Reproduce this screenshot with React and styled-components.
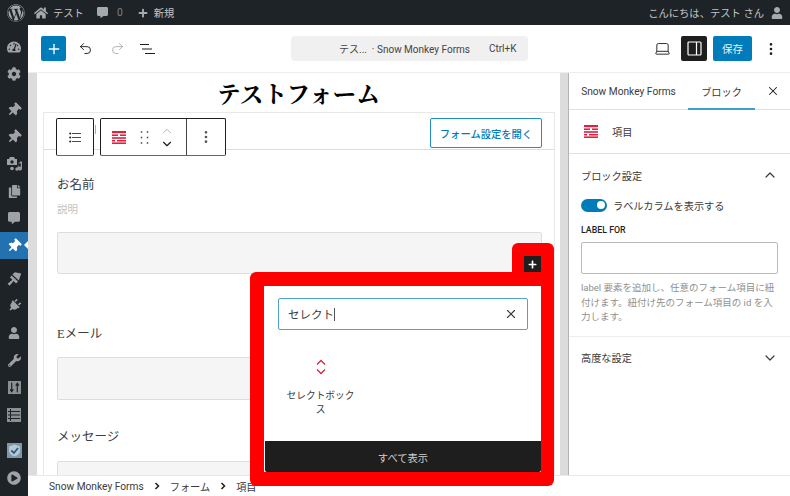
import React from "react";
import styled, { createGlobalStyle } from "styled-components";
import { Plus, Undo2, Redo2, X, ChevronUp, ChevronDown, EllipsisVertical, Laptop } from "lucide-react";
import {
  FaWordpress, FaHome, FaCommentAlt, FaTachometerAlt, FaCog, FaThumbtack, FaCopy,
  FaPlug, FaUser, FaWrench, FaPlayCircle, FaPlus,
} from "react-icons/fa";

const SANS = `Roboto, "Noto Sans CJK JP", sans-serif`;

const Global = createGlobalStyle`
  html, body { margin: 0; padding: 0; height: 100%; overflow: hidden; background: #fff; }
  #root { height: 100%; }
  * { box-sizing: border-box; }
  body { font-family: ${SANS}; color: #1e1e1e; }
`;

const Page = styled.div`
  position: relative;
  width: 790px;
  height: 496px;
  overflow: hidden;
  display: flex;
  flex-direction: column;
`;

/* Admin bar */
const AdminBar = styled.header`
  height: 25px;
  flex: none;
  background: #1d2327;
  color: #c3c4c7;
  display: flex;
  align-items: center;
  font-size: 10.3px;
  padding: 0 7px 0 7px;
`;
const BarItem = styled.div`
  display: flex;
  align-items: center;
  gap: ${p => p.$gap ?? 5}px;
  margin-left: ${p => p.$ml ?? 0}px;
  color: ${p => p.$dim ? "#7d8185" : "#c3c4c7"};
  svg { color: #a7aaad; flex: none; }
`;
const BarSpacer = styled.div`flex: 1;`;

/* Layout */
const Body = styled.div`
  flex: 1;
  display: flex;
  min-height: 0;
`;
const AdminMenu = styled.nav`
  width: 28px;
  flex: none;
  background: #1d2327;
  padding-top: 8px;
  display: flex;
  flex-direction: column;
`;
const MenuItem = styled.div`
  position: relative;
  height: 27.2px;
  flex: none;
  margin-top: ${p => p.$gap ?? 0}px;
  display: flex;
  align-items: center;
  justify-content: center;
  color: ${p => p.$active ? "#fff" : "#9ea2a6"};
  background: ${p => p.$active ? "#2271b1" : "transparent"};
  &::after {
    content: "";
    display: ${p => p.$active ? "block" : "none"};
    position: absolute;
    right: 0;
    top: 9px;
    border: 4.5px solid transparent;
    border-right-color: #fff;
    border-left-width: 0;
  }
`;
const Pin = styled(FaThumbtack)`
  transform: rotate(45deg);
`;
const Plug = styled(FaPlug)`
  transform: rotate(45deg);
`;
const Workspace = styled.main`
  flex: 1;
  min-width: 0;
  display: flex;
  flex-direction: column;
`;

/* Top toolbar */
const TopBar = styled.div`
  height: 48px;
  flex: none;
  display: flex;
  align-items: center;
  padding: 0 0 0 13px;
  border-bottom: 1px solid #eee;
  background: #fff;
`;
const InserterToggle = styled.div`
  width: 25px;
  height: 25px;
  background: #007cba;
  border-radius: 2px;
  color: #fff;
  display: flex;
  align-items: center;
  justify-content: center;
`;
const ToolIcon = styled.div`
  width: ${p => p.$w ?? 32}px;
  flex: none;
  display: flex;
  align-items: center;
  justify-content: center;
  color: ${p => p.$muted ? "#b0b0b0" : "#1e1e1e"};
`;
const ToolLeft = styled.div`
  display: flex;
  align-items: center;
  width: 250px;
  flex: none;
`;
const CommandCenter = styled.div`
  width: 237px;
  height: 25px;
  flex: none;
  background: #f0f0f0;
  border-radius: 4px;
  display: flex;
  align-items: center;
  font-size: 10px;
  color: #444;
  padding: 0 0 0 48px;
`;
const CommandShortcut = styled.span`
  margin-left: 19px;
  color: #444;
`;
const ToolRight = styled.div`
  flex: 1;
  display: flex;
  align-items: center;
  justify-content: flex-end;
`;
const SidebarToggle = styled.div`
  width: 26px;
  height: 25px;
  background: #1e1e1e;
  border-radius: 2px;
  margin: 0 6px;
  display: flex;
  align-items: center;
  justify-content: center;
  color: #fff;
`;
const SaveButton = styled.div`
  width: 39px;
  height: 25px;
  background: #007cba;
  color: #e8f2f8;
  border-radius: 2px;
  font-size: 10.5px;
  display: flex;
  align-items: center;
  justify-content: center;
`;

/* Editor */
const EditorRow = styled.div`
  flex: 1;
  min-height: 0;
  display: flex;
  border-bottom: 1px solid #e8e8e8;
`;
const EditorScroll = styled.div`
  width: 541px;
  flex: none;
  background: #dcdcdc;
  padding: 0 8px 0 9px;
  border-right: 1px solid #b4b4b4;
  overflow: hidden;
`;
const Canvas = styled.div`
  height: 100%;
  background: #fff;
  padding: 0 5px 0 6px;
  overflow: hidden;
`;
const Title = styled.h1`
  margin: 0;
  height: 39px;
  font: 700 23.7px/40px "Noto Serif CJK JP", "Liberation Serif", serif;
  color: #000;
  text-align: center;
  padding-right: 1px;
`;
const FormBox = styled.section`
  border: 1px solid #e8e8e8;
  border-bottom: 0;
  height: 400px;
`;
const FormHeader = styled.div`
  height: 37px;
  border-bottom: 1px solid #ddd;
  display: flex;
  align-items: center;
  justify-content: flex-end;
  padding: 4px 12px 0 0;
`;
const OutlineButton = styled.div`
  width: 112px;
  height: 30px;
  border: 1px solid #1f8fc6;
  border-radius: 2px;
  color: #007cba;
  font-size: 10.3px;
  font-weight: 500;
  display: flex;
  align-items: center;
  justify-content: center;
`;
const FormBody = styled.div`
  padding: 26px 12px 0 13px;
  display: flex;
  flex-direction: column;
`;
const FieldLabel = styled.div`
  font: 400 12.5px/18px "Liberation Serif", "Noto Sans CJK JP", serif;
  color: #3c3c3c;
  margin-top: ${p => p.$mt ?? 0}px;
`;
const FieldHint = styled.div`
  font-size: 10.5px;
  line-height: 16px;
  color: #c2c2c2;
  margin-top: 8px;
`;
const FieldInput = styled.div`
  height: ${p => p.$h ?? 42}px;
  background: #f5f5f5;
  border: 1px solid #ddd;
  border-radius: 2px;
  margin-top: ${p => p.$mt ?? 0}px;
`;

/* Inspector */
const Inspector = styled.aside`
  flex: 1;
  background: #fff;
  display: flex;
  flex-direction: column;
`;
const Tabs = styled.div`
  height: 37px;
  flex: none;
  border-bottom: 1px solid #e0e0e0;
  display: flex;
  align-items: stretch;
  font-size: 10.2px;
  color: #3a3a3a;
  padding-left: 12px;
`;
const Tab = styled.div`
  display: flex;
  align-items: center;
  justify-content: center;
  white-space: nowrap;
  width: ${p => p.$w}px;
  margin-left: ${p => p.$ml ?? 0}px;
  margin-bottom: -1px;
  border-bottom: ${p => p.$active ? "2px solid #3f9fd0" : "0"};
  padding-top: ${p => p.$active ? "2px" : "0"};
`;
const TabClose = styled.div`
  flex: 1;
  display: flex;
  align-items: center;
  justify-content: center;
  color: #1e1e1e;
`;
const BlockCard = styled.div`
  height: 44px;
  flex: none;
  border-bottom: 1px solid #e0e0e0;
  display: flex;
  align-items: center;
  padding-left: 15px;
  gap: 13px;
  font-size: 10.2px;
  color: #3a3a3a;
`;
const Panel = styled.section`
  padding: 0 12px;
  border-bottom: ${p => p.$flat ? "0" : "1px solid #eee"};
  display: flex;
  flex-direction: column;
`;
const PanelHead = styled.div`
  height: 42px;
  flex: none;
  display: flex;
  align-items: center;
  justify-content: space-between;
  font-size: 10.2px;
  color: #3a3a3a;
`;
const ToggleRow = styled.div`
  display: flex;
  align-items: center;
  gap: 6px;
  height: 16px;
  margin-top: 1px;
  font-size: 10.2px;
  color: #3a3a3a;
`;
const Switch = styled.div`
  position: relative;
  width: 26px;
  height: 13px;
  border-radius: 7px;
  background: #007cba;
  &::after {
    content: "";
    position: absolute;
    top: 2.5px;
    right: 2.5px;
    width: 8px;
    height: 8px;
    border-radius: 50%;
    background: #fff;
  }
`;
const FieldCaps = styled.div`
  font-size: 8.8px;
  font-weight: 500;
  line-height: 12px;
  color: #1e1e1e;
  margin-top: 11px;
`;
const SideInput = styled.div`
  height: 32px;
  border: 1px solid #bbb;
  border-radius: 2px;
  margin-top: 6px;
`;
const HelpText = styled.p`
  margin: 7px 0 11px;
  font-size: 9.5px;
  line-height: 14.5px;
  color: #8f8f8f;
`;

/* Breadcrumb */
const Breadcrumb = styled.footer`
  height: 20px;
  flex: none;
  display: flex;
  align-items: center;
  padding: 0 0 0 21px;
  font-size: 10.2px;
  color: #3a3a3a;
  gap: 10px;
  svg { color: #1e1e1e; }
`;

/* Overlays */
const BlockToolbar = styled.div`
  position: absolute;
  left: 56px;
  top: 118px;
  display: flex;
  gap: 6px;
  color: #1e1e1e;
`;
const ToolbarGroup = styled.div`
  height: 38px;
  border: 1px solid #1e1e1e;
  border-bottom-color: #666;
  border-radius: 2px;
  background: #fff;
  display: flex;
  align-items: center;
`;
const ToolbarCell = styled.div`
  width: ${p => p.$w}px;
  height: 100%;
  flex: none;
  display: flex;
  align-items: center;
  justify-content: center;
  border-left: ${p => p.$divider ? "1px solid #444" : "0"};
  color: ${p => p.$divider ? "#555" : "inherit"};
`;
const MoverStack = styled.div`
  display: flex;
  flex-direction: column;
  align-items: center;
  margin-right: 3px;
  svg:first-child { color: #aaa; margin-bottom: -1px; }
`;
const PeekMark = styled.span`
  position: absolute;
  left: 95px;
  top: 125px;
  width: 1px;
  height: 9px;
  background: #aaa;
`;
const RedTab = styled.div`
  position: absolute;
  left: 512px;
  top: 243px;
  width: 42px;
  height: 45px;
  background: #f00;
  border-radius: 6px 6px 0 0;
  display: flex;
  justify-content: flex-end;
  padding: 13px 13px 0 0;
`;
const AppenderButton = styled.div`
  width: 17px;
  height: 17px;
  background: #1e1e1e;
  color: #fff;
  display: flex;
  align-items: center;
  justify-content: center;
`;
const RedFrame = styled.div`
  position: absolute;
  left: 250px;
  top: 272px;
  width: 304px;
  height: 214px;
  background: #f00;
  border-radius: 6px;
  padding: 14px 13px 14px 14px;
`;
const Inserter = styled.div`
  height: 100%;
  background: #fff;
  display: flex;
  flex-direction: column;
`;
const SearchBox = styled.div`
  flex: none;
  height: 32px;
  margin: 12px 13px 0 14px;
  border: 1px solid #4fa3d1;
  border-radius: 2px;
  display: flex;
  align-items: center;
  justify-content: space-between;
  padding: 0 9px;
  font-size: 11.5px;
  color: #3a3a3a;
`;
const Caret = styled.span`
  display: inline-block;
  width: 1px;
  height: 13px;
  background: #555;
  vertical-align: -2px;
`;
const Results = styled.div`
  flex: 1;
  padding: 29px 0 0 19px;
`;
const ResultItem = styled.div`
  width: 75px;
  display: flex;
  flex-direction: column;
  align-items: center;
  gap: 14px;
  text-align: center;
  font-size: 9.7px;
  line-height: 13.5px;
  color: #3a3a3a;
`;
const ShowAll = styled.div`
  height: 31px;
  flex: none;
  margin-left: 1px;
  background: #1e1e1e;
  color: #d0d0d0;
  border-radius: 0 0 2px 2px;
  font-size: 10.3px;
  display: flex;
  align-items: center;
  justify-content: center;
  padding-top: 2px;
`;

/* Drawings */
const ItemIcon = () => (
  <svg width="15" height="13" viewBox="0 0 15 13" fill="#e0203f">
    <rect x="0" y="0" width="14" height="2.2" />
    <rect x="0" y="3.4" width="6" height="1.6" />
    <rect x="8" y="3.4" width="6" height="1.6" />
    <rect x="0" y="6.2" width="14" height="1.6" />
    <rect x="0" y="9" width="3" height="1.5" />
    <rect x="5" y="9" width="9" height="1.5" />
    <rect x="0" y="11.4" width="14" height="1.6" />
  </svg>
);
const ListViewIcon = () => (
  <svg width="16" height="12" viewBox="0 0 16 12" fill="none" stroke="#1e1e1e" strokeWidth="1.2">
    <path d="M0 1.5h10M3 6h10M6 10.5h10" transform="translate(-1 0)" />
  </svg>
);
const OutlineIcon = () => (
  <svg width="12" height="11" viewBox="0 0 12 11" fill="#1e1e1e">
    <circle cx="1.2" cy="1.5" r="1" /><circle cx="1.2" cy="5.5" r="1" /><circle cx="1.2" cy="9.5" r="1" />
    <rect x="3" y="1.1" width="9" height=".8" /><rect x="3" y="5.1" width="9" height=".8" /><rect x="3" y="9.1" width="9" height=".8" />
  </svg>
);
const DragIcon = () => (
  <svg width="9" height="13" viewBox="0 0 9 13" fill="#444">
    {[1, 6.5, 12].flatMap(y => [1.5, 7.5].map(x => <rect key={`${x}-${y}`} x={x - .75} y={y - .75} width="1.5" height="1.5" />))}
  </svg>
);
const SidebarIcon = () => (
  <svg width="15" height="15" viewBox="0 0 15 15" fill="none" stroke="currentColor" strokeWidth="1.2">
    <rect x="1" y="1" width="13" height="13" rx="1" />
    <path d="M9.5 1v13" />
  </svg>
);
const MediaIcon = () => (
  <svg width="17" height="15" viewBox="0 0 17 15" fill="currentColor">
    <path d="M1 3h2l1-2h4l1 2h2v6H1z" />
    <circle cx="6" cy="6" r="1.7" fill="#1d2327" />
    <path d="M14 5.5h2v7a2 2 0 1 1-1.2-1.8V7.5h-2.3v5.6a1.6 1.6 0 1 1-1.2-1.5z" opacity=".95" />
    <circle cx="6" cy="12.5" r="1.8" />
  </svg>
);
const BrushIcon = () => (
  <svg width="16" height="16" viewBox="0 0 20 20" fill="currentColor">
    <path d="M8 4.500 11 1.500l8 1.500-3 9z" />
    <path d="M7 5.500 15 13l-2.500 2.500-3-3-5 6-2.500-2.500 6-5-3-3z" />
  </svg>
);
const SlidersIcon = () => (
  <svg width="13" height="13" viewBox="0 0 14 14">
    <rect width="14" height="14" fill="currentColor" opacity=".85" />
    <path d="M4 2v9M2.300 9 4 11.500 5.700 9M10 12V3M8.300 5 10 2.500 11.700 5" fill="none" stroke="#1d2327" strokeWidth="1.300" />
  </svg>
);
const ListIcon = () => (
  <svg width="14" height="14" viewBox="0 0 14 14">
    <rect width="14" height="14" fill="currentColor" opacity=".85" />
    <path d="M1 3.500h12M1 7h12M1 10.500h12M3.500 1v12" fill="none" stroke="#1d2327" strokeWidth="1" />
  </svg>
);
const ShieldIcon = () => (
  <svg width="15" height="15" viewBox="0 0 15 15">
    <rect width="15" height="15" fill="#7f98a8" />
    <path d="M7.500 1.500 13 3.500v4c0 3-2.500 5-5.500 6C4.500 12.500 2 10.500 2 7.500v-4z" fill="#b9c9d3" />
    <path d="M4.300 7.500 7 10l4-5" fill="none" stroke="#2a5a8f" strokeWidth="1.800" />
  </svg>
);
const SelectIcon = () => (
  <svg width="12" height="16" viewBox="0 0 12 16" fill="none" stroke="#d9243f" strokeWidth="1.300">
    <path d="M2 5.500 6 1.500l4 4M2 10.500l4 4 4-4" />
  </svg>
);
const CrumbChevron = () => (
  <svg width="6" height="8" viewBox="0 0 6 8" fill="none" stroke="currentColor" strokeWidth="1.500">
    <path d="M1.500 1 4.500 4l-3 3" />
  </svg>
);

export default function App() {
  return (
    <Page>
      <Global />
      <AdminBar>
        <BarItem><FaWordpress size={18} /></BarItem>
        <BarItem $ml={9}><FaHome size={14} /><span>テスト</span></BarItem>
        <BarItem $ml={13} $dim $gap={9}><FaCommentAlt size={11} /><span>0</span></BarItem>
        <BarItem $ml={15} $gap={6}><FaPlus size={10} /><span>新規</span></BarItem>
        <BarSpacer />
        <BarItem $gap={7}><span>こんにちは、テスト さん</span><FaUser size={12} /></BarItem>
      </AdminBar>
      <Body>
        <AdminMenu>
          <MenuItem><FaTachometerAlt size={14} /></MenuItem>
          <MenuItem><FaCog size={14} /></MenuItem>
          <MenuItem $gap={8.6}><Pin size={14} /></MenuItem>
          <MenuItem><Pin size={14} /></MenuItem>
          <MenuItem><MediaIcon /></MenuItem>
          <MenuItem><FaCopy size={13} /></MenuItem>
          <MenuItem><FaCommentAlt size={12} /></MenuItem>
          <MenuItem $active><Pin size={14} /></MenuItem>
          <MenuItem $gap={6}><BrushIcon /></MenuItem>
          <MenuItem><Plug size={13} /></MenuItem>
          <MenuItem><FaUser size={12} /></MenuItem>
          <MenuItem><FaWrench size={13} /></MenuItem>
          <MenuItem><SlidersIcon /></MenuItem>
          <MenuItem><ListIcon /></MenuItem>
          <MenuItem $gap={9}><ShieldIcon /></MenuItem>
          <MenuItem><FaPlayCircle size={14} /></MenuItem>
        </AdminMenu>
        <Workspace>
          <TopBar>
            <ToolLeft>
              <InserterToggle><Plus size={16} strokeWidth={2} /></InserterToggle>
              <ToolIcon $w={38}><Undo2 size={15} strokeWidth={1.5} /></ToolIcon>
              <ToolIcon $w={26} $muted><Redo2 size={15} strokeWidth={1.5} /></ToolIcon>
              <ToolIcon $w={36}><ListViewIcon /></ToolIcon>
            </ToolLeft>
            <CommandCenter>
              <span>テス...&nbsp; · Snow Monkey Forms</span>
              <CommandShortcut>Ctrl+K</CommandShortcut>
            </CommandCenter>
            <ToolRight>
              <ToolIcon $w={26}><Laptop size={17} strokeWidth={1.3} /></ToolIcon>
              <SidebarToggle><SidebarIcon /></SidebarToggle>
              <SaveButton>保存</SaveButton>
              <ToolIcon $w={38}><EllipsisVertical size={16} /></ToolIcon>
            </ToolRight>
          </TopBar>
          <EditorRow>
            <EditorScroll>
              <Canvas>
                <Title>テストフォーム</Title>
                <FormBox>
                  <FormHeader><OutlineButton>フォーム設定を開く</OutlineButton></FormHeader>
                  <FormBody>
                    <FieldLabel>お名前</FieldLabel>
                    <FieldHint>説明</FieldHint>
                    <FieldInput $mt={14} />
                    <FieldLabel $mt={51}>Eメール</FieldLabel>
                    <FieldInput $mt={14} $h={43} />
                    <FieldLabel $mt={28}>メッセージ</FieldLabel>
                    <FieldInput $mt={15} $h={80} />
                  </FormBody>
                </FormBox>
              </Canvas>
            </EditorScroll>
            <Inspector>
              <Tabs>
                <Tab $w={95}>Snow Monkey Forms</Tab>
                <Tab $w={67} $ml={12} $active>ブロック</Tab>
                <TabClose><X size={14} strokeWidth={1.8} /></TabClose>
              </Tabs>
              <BlockCard><ItemIcon /><span>項目</span></BlockCard>
              <Panel>
                <PanelHead>ブロック設定<ChevronUp size={16} strokeWidth={1.8} /></PanelHead>
                <ToggleRow><Switch /><span>ラベルカラムを表示する</span></ToggleRow>
                <FieldCaps>LABEL FOR</FieldCaps>
                <SideInput />
                <HelpText>label 要素を追加し、任意のフォーム項目に紐付けます。紐付け先のフォーム項目の id を入力します。</HelpText>
              </Panel>
              <Panel $flat>
                <PanelHead>高度な設定<ChevronDown size={16} strokeWidth={1.8} /></PanelHead>
              </Panel>
            </Inspector>
          </EditorRow>
          <Breadcrumb>
            <span>Snow Monkey Forms</span>
            <CrumbChevron />
            <span>フォーム</span>
            <CrumbChevron />
            <span>項目</span>
          </Breadcrumb>
        </Workspace>
      </Body>

      <PeekMark />
      <BlockToolbar>
        <ToolbarGroup><ToolbarCell $w={36}><OutlineIcon /></ToolbarCell></ToolbarGroup>
        <ToolbarGroup>
          <ToolbarCell $w={37}><ItemIcon /></ToolbarCell>
          <ToolbarCell $w={13}><DragIcon /></ToolbarCell>
          <ToolbarCell $w={35}>
            <MoverStack>
              <ChevronUp size={14} strokeWidth={1.5} />
              <ChevronDown size={14} strokeWidth={2} />
            </MoverStack>
          </ToolbarCell>
          <ToolbarCell $w={39} $divider><EllipsisVertical size={16} /></ToolbarCell>
        </ToolbarGroup>
      </BlockToolbar>

      <RedTab><AppenderButton><FaPlus size={9} /></AppenderButton></RedTab>
      <RedFrame>
        <Inserter>
          <SearchBox>
            <span>セレクト<Caret /></span>
            <X size={14} strokeWidth={2} />
          </SearchBox>
          <Results>
            <ResultItem>
              <SelectIcon />
              <span>セレクトボックス</span>
            </ResultItem>
          </Results>
          <ShowAll>すべて表示</ShowAll>
        </Inserter>
      </RedFrame>
    </Page>
  );
}
